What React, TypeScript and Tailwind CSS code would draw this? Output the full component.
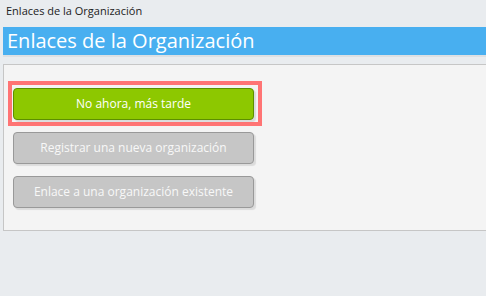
const font = { fontFamily: '"Open Sans", "Noto Sans", sans-serif' };

export default function App() {
  return (
    <div className="w-[486px] h-[296px] bg-[#e9ecef] overflow-hidden" style={font}>
      <div className="h-[27px] pl-[6px] pt-[3px] text-[11px] leading-[16px] text-[#222]">
        Enlaces de la Organización
      </div>
      <div className="ml-[3px] h-[28px] bg-[#48aff0] pl-[4px] text-[20px] leading-[28px] text-white shadow-[0_2px_0_#dde0e3]">
        Enlaces de la Organización
      </div>
      <div className="ml-[3px] mt-[9px] h-[167px] border border-r-0 border-[#c6c6c6] bg-[#f4f4f4] pl-[4px] pt-[16px]">
        <div className="w-[254px] border-4 border-[#ff7474] pl-[1px] pt-[3px] pb-[2px]">
          <button className="w-[241px] h-[32px] rounded-[4px] border border-[#5d8f00] bg-[#8dc800] text-[12px] text-white shadow-[2px_2px_1px_rgba(0,0,0,0.1)]">
            No ahora, más tarde
          </button>
        </div>
        <div className="flex flex-col gap-[12px] pl-[5px] pt-[6px]">
          <button className="w-[241px] h-[32px] rounded-[4px] border border-[#999] bg-[#c6c6c6] text-[12px] text-[#f8f8f8] shadow-[2px_2px_1px_rgba(0,0,0,0.1)]">
            Registrar una nueva organización
          </button>
          <button className="w-[241px] h-[32px] rounded-[4px] border border-[#999] bg-[#c6c6c6] text-[12px] text-[#f8f8f8] shadow-[2px_2px_1px_rgba(0,0,0,0.1)]">
            Enlace a una organización existente
          </button>
        </div>
      </div>
    </div>
  );
}
